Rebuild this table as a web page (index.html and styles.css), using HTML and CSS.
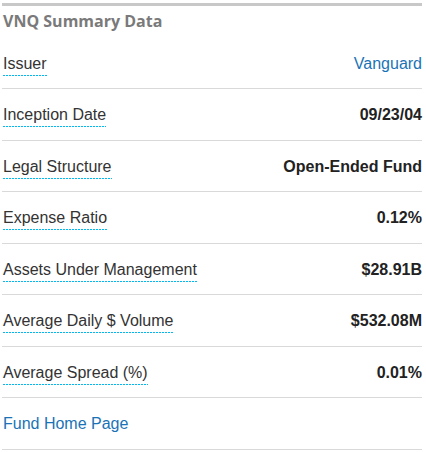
FILE: index.html
```html
<!DOCTYPE html>
<html>
<head>
<meta charset="utf-8">
<link rel="stylesheet" href="styles.css">
</head>
<body>
<div class="panel">
  <h2 class="title">VNQ Summary Data</h2>
  <div class="row"><span class="label">Issuer</span><a class="value link" href="#">Vanguard</a></div>
  <div class="row"><span class="label">Inception Date</span><span class="value">09/23/04</span></div>
  <div class="row"><span class="label">Legal Structure</span><span class="value">Open-Ended Fund</span></div>
  <div class="row"><span class="label">Expense Ratio</span><span class="value">0.12%</span></div>
  <div class="row"><span class="label">Assets Under Management</span><span class="value">$28.91B</span></div>
  <div class="row"><span class="label">Average Daily $ Volume</span><span class="value">$532.08M</span></div>
  <div class="row"><span class="label">Average Spread (%)</span><span class="value">0.01%</span></div>
  <div class="row"><a class="home" href="#">Fund Home Page</a></div>
</div>
</body>
</html>
```

FILE: styles.css
```css
html, body {
  margin: 0;
  padding: 0;
  background: #ffffff;
}
.panel {
  margin: 3px 0 0 2px;
  width: 420px;
  border-top: 3px solid #c8c8c8;
  font-family: "Liberation Sans", Arial, sans-serif;
}
.title {
  margin: 0;
  padding: 5px 0 0 1px;
  height: 32px;
  box-sizing: border-box;
  font-family: "Open Sans", sans-serif;
  font-weight: bold;
  font-size: 16px;
  line-height: 20px;
  color: #7a7a7a;
}
.row {
  display: flex;
  justify-content: space-between;
  align-items: flex-start;
  padding: 17px 0 12px 1px;
  border-bottom: 1px solid #d9d9d9;
  font-size: 16px;
  line-height: 18px;
}
.row:nth-of-type(even) {
  padding-bottom: 13px;
}
.label {
  display: inline-block;
  color: #333333;
  padding-bottom: 3px;
  background-image: repeating-linear-gradient(to right, #00b9ef 0, #00b9ef 2px, transparent 2px, transparent 3px);
  background-size: 100% 1px;
  background-position: left bottom;
  background-repeat: no-repeat;
}
.value {
  color: #222222;
  font-weight: bold;
}
.link {
  font-weight: normal;
  color: #1a73b6;
  text-decoration: none;
}
.home {
  color: #1a73b6;
  text-decoration: none;
  padding-bottom: 3px;
}
```
